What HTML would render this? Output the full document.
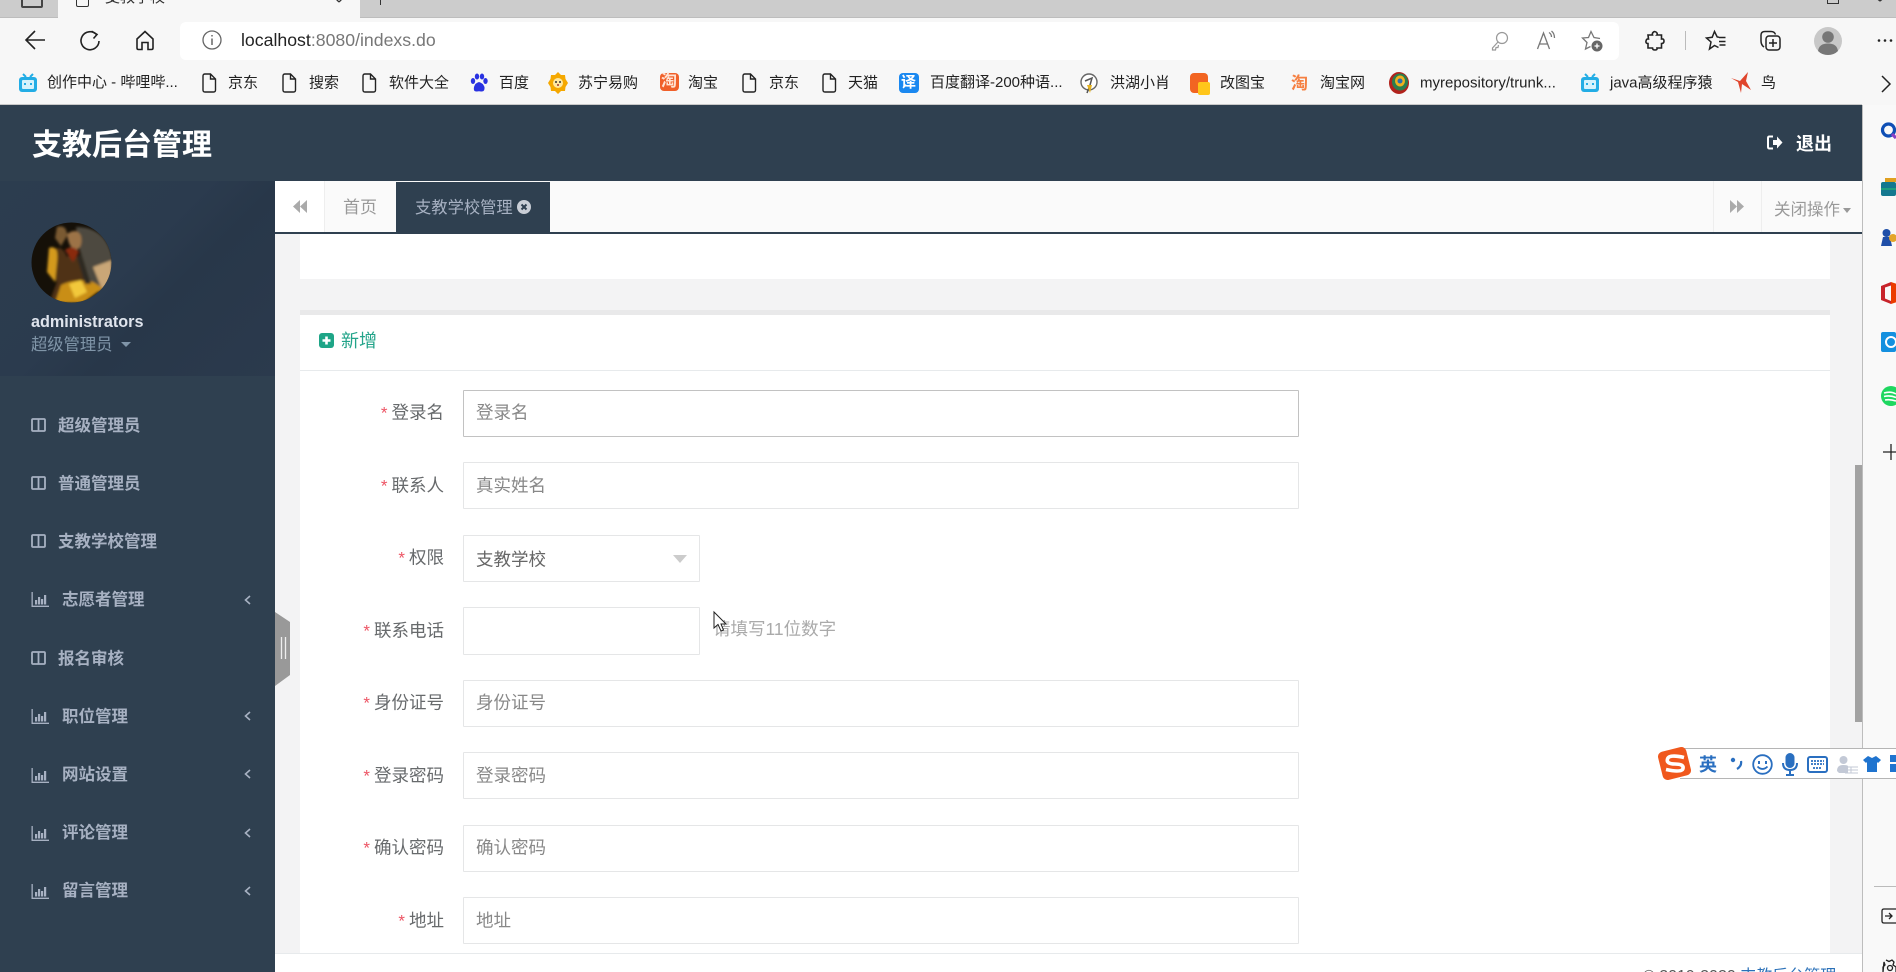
<!DOCTYPE html>
<html lang="zh"><head><meta charset="utf-8"><title>支教后台管理</title>
<style>
html,body{margin:0;padding:0;width:1896px;height:972px;overflow:hidden;background:#fff}
body{position:relative;font-family:"Liberation Sans","Noto Sans CJK SC",sans-serif}
.a{position:absolute}
.t{position:absolute;white-space:nowrap;line-height:1}
svg{position:absolute;overflow:visible}
.bm{font-size:15px;color:#222;transform:translateY(-50%);top:83px}
.m{font-size:16.5px;font-weight:bold;color:#a7b1c2;left:58px;transform:translateY(-50%)}
.m.c{left:62px}
.inp{position:absolute;left:463px;width:834px;height:45px;background:#fff;border:1px solid #e5e6e7;border-radius:1px}
.l{font-size:17.5px;color:#676a6c;text-align:right;right:1452px;transform:translateY(-50%)}
.l i{font-style:normal;color:#ed5565;font-size:17px;margin-right:4px}
.p{font-size:17.5px;color:#888;left:476px;transform:translateY(-50%)}
</style></head><body>

<!-- browser chrome -->
<div class="a" style="left:0;top:0;width:1896px;height:105px;background:#f7f7f7"></div>
<div class="a" style="left:0;top:0;width:1896px;height:17px;background:#cccccc;border-bottom:1px solid #bdbdbd"></div>
<div class="a" style="left:58px;top:0;width:302px;height:18px;background:#f7f7f7"></div>
<div class="a" style="left:21px;top:-6px;width:18px;height:10px;border:2px solid #444;border-radius:2px"></div>
<div class="a" style="left:76px;top:-8px;width:11px;height:13px;border:1.5px solid #333;border-radius:2px"></div>
<div class="t" style="left:105px;top:-10px;font-size:15px;color:#333">支教学校</div>
<svg style="left:333px;top:0" width="12" height="6"><path d="M1-3L6 2 M11-3L6 2" stroke="#333" stroke-width="1.3" fill="none"/></svg>
<div class="a" style="left:380px;top:0;width:1px;height:5px;background:#333"></div>
<div class="a" style="left:1827px;top:-5px;width:10px;height:7px;border:1.5px solid #333"></div>
<svg style="left:1874px;top:0" width="12" height="6"><path d="M1-3L6 1 M11-3L6 1" stroke="#333" stroke-width="1.3" fill="none"/></svg>

<div class="a" style="left:180px;top:22px;width:1439px;height:38px;background:#fff;border-radius:6px"></div>
<svg style="left:24px;top:28px" width="24" height="24" fill="none" stroke="#222" stroke-width="1.6"><path d="M2 12H21M11 3L2 12L11 21"/></svg>
<svg style="left:79px;top:29px" width="22" height="24" fill="none" stroke="#222" stroke-width="1.6"><path d="M17.5 5.5A9 9 0 1 0 20 12"/><path d="M12.5 2.2L18 5.5 14.5 9.5"/></svg>
<svg style="left:135px;top:30px" width="20" height="21" fill="none" stroke="#222" stroke-width="1.6"><path d="M2 9L10 1.5 18 9V18Q18 19.5 16.5 19.5H13V12.5H7V19.5H3.5Q2 19.5 2 18Z"/></svg>
<svg style="left:202px;top:30px" width="20" height="20" fill="none" stroke="#666" stroke-width="1.3"><circle cx="10" cy="10" r="9"/><path d="M10 8.5V15M10 5V6.5" stroke-width="1.5"/></svg>
<div class="t" style="left:241px;top:32px;font-size:17.7px;color:#222"><span>localhost</span><span style="color:#777">:8080/indexs.do</span></div>
<svg style="left:1491px;top:31px" width="18" height="20" fill="none" stroke="#999" stroke-width="1.2"><circle cx="11" cy="7" r="5.5"/><path d="M7 11L1.5 17V19H4.5L5 16.5H7L7.5 14"/></svg>
<svg style="left:1536px;top:30px" width="20" height="20" fill="none" stroke="#777" stroke-width="1.3"><path d="M1.5 19L7.5 3 13.5 19M3.5 14H11.5"/><path d="M13 2.5Q15.5 4 15.5 7M15.5 1Q18.5 3.5 18.5 8"/></svg>
<svg style="left:1581px;top:30px" width="24" height="22" fill="none" stroke="#777" stroke-width="1.3"><path d="M19 8.500L13 7.500 10 1.500 7.500 7.500 1.500 8 6 12.500 4.500 19 9.500 16.500"/><circle cx="16" cy="16" r="5.5" fill="#666" stroke="none"/><path d="M13.500 16H18.500M16 13.500V18.500" stroke="#fff" stroke-width="1.300"/></svg>
<svg style="left:1645px;top:30px" width="20" height="21" fill="none" stroke="#222" stroke-width="1.6"><path d="M8 2.5Q10 0.5 12 3Q12.5 4.5 12 5H16.5V9Q19 8.5 19 11T16.5 13.5V18H12Q12.5 20 10 20T7.5 18H3V13.5Q0.5 13.5 1 11T3.5 9L3 5H7.5Q7 3.5 8 2.5Z"/></svg>
<div class="a" style="left:1685px;top:31px;width:1px;height:19px;background:#bbb"></div>
<svg style="left:1705px;top:30px" width="22" height="21" fill="none" stroke="#222" stroke-width="1.5"><path d="M14 7.300L12.200 7 9.500 1.500 7.200 7.300 1.500 8 6 12 4.500 19 9.500 15.500 13.500 17.500"/><path d="M14 7.500H20.500M14 11.500H20.500M14.500 15H20.500" stroke-width="1.400"/></svg>
<svg style="left:1760px;top:30px" width="22" height="22" fill="none" stroke="#222" stroke-width="1.5"><path d="M4 17Q1 15 1 11V5Q1 1.5 5 1.5H11Q14.5 1.5 15.5 4.5"/><rect x="6" y="6" width="14" height="14" rx="3"/><path d="M9 13H17M13 9V17"/></svg>
<svg style="left:1814px;top:27px" width="28" height="28"><circle cx="14" cy="14" r="14" fill="#c8c8c8"/><circle cx="14" cy="10" r="5.8" fill="#777"/><path d="M4 24Q5 16.5 14 16.5T24 24Q20 28 14 28T4 24Z" fill="#777"/></svg>
<svg style="left:1877px;top:38px" width="16" height="5"><circle cx="2" cy="2.5" r="1.3" fill="#222"/><circle cx="8" cy="2.5" r="1.3" fill="#222"/><circle cx="14" cy="2.5" r="1.3" fill="#222"/></svg>

<!-- bookmarks -->
<svg style="left:18px;top:73px" width="20" height="20"><path d="M5 1L8 4M15 1L12 4" stroke="#23ade5" stroke-width="2"/><rect x="1" y="4" width="18" height="15" rx="3" fill="#23ade5"/><rect x="4" y="7" width="12" height="9" rx="1" fill="#d5f2fc"/><path d="M7 10V12M13 10V12" stroke="#23ade5" stroke-width="2"/></svg>
<div class="t bm" style="left:47px;width:132px;overflow:hidden;line-height:18px">创作中心 - 哔哩哔...</div>
<svg style="left:201px;top:73px" width="16" height="20" fill="none" stroke="#222" stroke-width="1.4"><path d="M2 3Q2 1 4 1H9.5L14.5 6V17Q14.5 19 12.5 19H4Q2 19 2 17ZM9.5 1V6H14.5"/></svg>
<div class="t bm" style="left:228px">京东</div>
<svg style="left:281px;top:73px" width="16" height="20" fill="none" stroke="#222" stroke-width="1.4"><path d="M2 3Q2 1 4 1H9.5L14.5 6V17Q14.5 19 12.5 19H4Q2 19 2 17ZM9.5 1V6H14.5"/></svg>
<div class="t bm" style="left:309px">搜索</div>
<svg style="left:361px;top:73px" width="16" height="20" fill="none" stroke="#222" stroke-width="1.4"><path d="M2 3Q2 1 4 1H9.5L14.5 6V17Q14.5 19 12.5 19H4Q2 19 2 17ZM9.5 1V6H14.5"/></svg>
<div class="t bm" style="left:389px">软件大全</div>
<svg style="left:470px;top:73px" width="18" height="20" fill="#2932e1"><ellipse cx="3" cy="8" rx="2.2" ry="3"/><ellipse cx="7" cy="3.5" rx="2.2" ry="3"/><ellipse cx="12" cy="3.5" rx="2.2" ry="3"/><ellipse cx="15.5" cy="8" rx="2.2" ry="3"/><path d="M9 9Q5 10 4 14Q3 19 7 18.5Q9 18 11 18.5Q15 19 14.5 14Q13 10 9 9Z"/></svg>
<div class="t bm" style="left:499px">百度</div>
<svg style="left:548px;top:72px" width="20" height="22"><path d="M10 0L13 3 17 3 17.5 7 20 11 17.5 15 17 19 13 19 10 22 7 19 3 19 2.5 15 0 11 2.5 7 3 3 7 3Z" fill="#f5a800"/><circle cx="10" cy="11" r="5" fill="#ffe8a0"/><circle cx="8" cy="10" r="1" fill="#333"/><circle cx="12" cy="10" r="1" fill="#333"/><path d="M9 13H11" stroke="#933" stroke-width="1.5"/></svg>
<div class="t bm" style="left:578px">苏宁易购</div>
<div class="a" style="left:660px;top:73px;width:19px;height:18px;background:#f0602a;border-radius:4px"></div>
<div class="t" style="left:661px;top:74px;font-size:16px;font-weight:bold;color:#ffe3d4">淘</div>
<div class="t bm" style="left:688px">淘宝</div>
<svg style="left:741px;top:73px" width="16" height="20" fill="none" stroke="#222" stroke-width="1.4"><path d="M2 3Q2 1 4 1H9.5L14.5 6V17Q14.5 19 12.5 19H4Q2 19 2 17ZM9.5 1V6H14.5"/></svg>
<div class="t bm" style="left:769px">京东</div>
<svg style="left:821px;top:73px" width="16" height="20" fill="none" stroke="#222" stroke-width="1.4"><path d="M2 3Q2 1 4 1H9.5L14.5 6V17Q14.5 19 12.5 19H4Q2 19 2 17ZM9.5 1V6H14.5"/></svg>
<div class="t bm" style="left:848px">天猫</div>
<div class="a" style="left:899px;top:73px;width:20px;height:20px;background:#1a88f0;border-radius:4px"></div>
<div class="t" style="left:901px;top:75px;font-size:15px;font-weight:bold;color:#fff">译</div>
<div class="t bm" style="left:930px;width:132px;overflow:hidden;line-height:18px">百度翻译-200种语...</div>
<svg style="left:1079px;top:73px" width="20" height="22"><ellipse cx="10" cy="9" rx="8" ry="8" fill="#fff" stroke="#666" stroke-width="1.4"/><path d="M6 8L13 5 11 12 8 20" stroke="#555" stroke-width="1.5" fill="none"/><path d="M8 12L11 20 13 12Z" fill="#e6b422"/></svg>
<div class="t bm" style="left:1110px">洪湖小肖</div>
<div class="a" style="left:1190px;top:73px;width:18px;height:20px;background:#f26522;border-radius:4px"></div>
<div class="a" style="left:1198px;top:82px;width:12px;height:13px;background:#ffc61b;border-radius:2px"></div>
<div class="t bm" style="left:1220px">改图宝</div>
<div class="t" style="left:1291px;top:75px;font-size:17px;font-weight:bold;color:#f68042">淘</div>
<div class="t bm" style="left:1320px">淘宝网</div>
<svg style="left:1389px;top:72px" width="20" height="22"><ellipse cx="10" cy="11" rx="10" ry="11" fill="#b1221c"/><ellipse cx="11" cy="10" rx="8" ry="8.5" fill="#2c7d4e"/><ellipse cx="11" cy="9" rx="5" ry="5.5" fill="#efb11d"/><circle cx="11" cy="9" r="2.5" fill="#2a6fb0"/></svg>
<div class="t bm" style="left:1420px">myrepository/trunk...</div>
<svg style="left:1580px;top:73px" width="20" height="20"><path d="M5 1L8 4M15 1L12 4" stroke="#23ade5" stroke-width="2"/><rect x="1" y="4" width="18" height="15" rx="3" fill="#23ade5"/><rect x="4" y="7" width="12" height="9" rx="1" fill="#d5f2fc"/><path d="M7 10V12M13 10V12" stroke="#23ade5" stroke-width="2"/></svg>
<div class="t bm" style="left:1610px">java高级程序猿</div>
<svg style="left:1731px;top:72px" width="21" height="22"><path d="M0 6L9 9 17 0 15 9 20 18 11 12 10 21 7 10Z" fill="#e0452c"/></svg>
<div class="t bm" style="left:1761px">鸟</div>
<svg style="left:1880px;top:75px" width="12" height="18" fill="none" stroke="#222" stroke-width="1.5"><path d="M2 1L10 9 2 17"/></svg>

<!-- app header -->
<div class="a" style="left:0;top:105px;width:1862px;height:76px;background:#2f4050"></div>
<div class="a" style="left:0;top:104px;width:1862px;height:1px;background:#c9c9c9"></div>
<div class="t" style="left:32px;top:131px;font-size:30px;font-weight:bold;color:#fff">支教后台管理</div>
<svg style="left:1767px;top:135px" width="16" height="15"><path d="M6 1.5H2.5Q1 1.5 1 3V12Q1 13.5 2.5 13.5H6" fill="none" stroke="#fff" stroke-width="2"/><path d="M6 5H10V1.5L15.5 7.5 10 13.5V10H6Z" fill="#fff"/></svg>
<div class="t" style="left:1796px;top:135px;font-size:18px;font-weight:bold;color:#fff">退出</div>

<!-- right edge bar -->
<div class="a" style="left:1862px;top:105px;width:34px;height:867px;background:#f9f9f9"></div>
<div class="a" style="left:1862px;top:105px;width:1px;height:867px;background:#bdbdbd"></div>
<svg style="left:1880px;top:122px" width="18" height="18" fill="none" stroke="#0f4fb5" stroke-width="3.2"><circle cx="8.5" cy="8" r="6"/><path d="M12 12L16 16" stroke="#8a3fc4"/></svg>
<div class="a" style="left:1881px;top:182px;width:15px;height:14px;background:#14788f;border-radius:2px"></div>
<div class="a" style="left:1885px;top:178px;width:11px;height:4px;border:2px solid #e0a020;box-sizing:border-box"></div>
<div class="a" style="left:1881px;top:188px;width:15px;height:2px;background:#1e9e7e"></div>
<svg style="left:1880px;top:228px" width="16" height="20"><circle cx="6.5" cy="5" r="4" fill="#1f4fa8"/><path d="M3 9H10L12 18H1Z" fill="#1f4fa8"/><circle cx="13" cy="10" r="4" fill="#e3a52b"/></svg>
<svg style="left:1881px;top:281px" width="16" height="24"><path d="M0 5L10 1V4.5L4 6.5V17.5L10 20V23L0 19Z" fill="#c8242b"/><path d="M10 1L16 3V21L10 23Z" fill="#eb3c00"/></svg>
<div class="a" style="left:1881px;top:332px;width:15px;height:20px;background:#1490df;border-radius:2px"></div>
<div class="a" style="left:1885px;top:336px;width:8px;height:8px;border:2px solid #fff;border-radius:50%;box-sizing:content-box"></div>
<svg style="left:1881px;top:386px" width="15" height="20"><circle cx="10" cy="10" r="10" fill="#1ed760"/><path d="M3 7Q10 5 15 8M3 10.500Q9 9 15 11.500M4 14Q9 13 15 15" stroke="#fff" stroke-width="1.6" fill="none"/></svg>
<svg style="left:1884px;top:444px" width="12" height="16" fill="none" stroke="#222" stroke-width="1.3"><path d="M7 0V16M-1 8H12"/></svg>
<div class="a" style="left:1874px;top:886px;width:22px;height:1px;background:#bbb"></div>
<svg style="left:1881px;top:908px" width="15" height="16" fill="none" stroke="#222" stroke-width="1.3"><path d="M15 1H3Q1 1 1 3V13Q1 15 3 15H15"/><path d="M4 8H11M8 5L11 8 8 11"/></svg>
<svg style="left:1881px;top:958px" width="15" height="16" fill="none" stroke="#222" stroke-width="1.3"><path d="M5 2L8 3.500 11 2 13 4 12 7 15 9 15 14M2 14V9L4 7 3 4Z"/><circle cx="9" cy="10" r="2.500"/></svg>

<!-- sidebar -->
<div class="a" style="left:0;top:181px;width:275px;height:791px;background:#2f4050"></div>
<div class="a" style="left:0;top:181px;width:275px;height:195px;background:linear-gradient(135deg,#2c3d4f 0%,#2b3b4e 45%,#283749 60%,#2b3a4d 100%)"></div>
<svg style="left:31px;top:222px" width="81" height="81">
<defs><clipPath id="av"><circle cx="40.500" cy="40.500" r="40"/></clipPath><filter id="bl" x="-10%" y="-10%" width="120%" height="120%"><feGaussianBlur stdDeviation="1.400"/></filter></defs>
<g clip-path="url(#av)"><rect width="81" height="81" fill="#151008"/>
<g filter="url(#bl)">
<path d="M45 5Q75 5 81 35V70H60L50 35Z" fill="#4d4a3f"/>
<path d="M62 45L81 38V72L70 65Z" fill="#c9a677"/>
<path d="M26 5Q36 2 36 14L30 24 24 16Z" fill="#7a5a30"/>
<path d="M36 12Q46 5 50 14 52 24 46 28 38 28 36 12Z" fill="#9c7347"/>
<path d="M20 30Q30 20 36 35 44 28 50 40L58 60 70 65 50 81H18L26 60 20 50Z" fill="#4f3316"/>
<path d="M18 26Q28 22 26 40L24 60 16 50Z" fill="#d49a1a"/>
<path d="M30 63Q45 56 62 60L72 66 52 81H24Z" fill="#c98e14"/>
<path d="M34 28Q42 22 48 30L42 40Z" fill="#8a2a10"/>
<path d="M38 62L50 58 56 70 44 76Z" fill="#f2c83a"/>
<path d="M50 30L60 62 54 62 46 36Z" fill="#2f2a22"/>
</g></g></svg>
<div class="t" style="left:31px;top:314px;font-size:16.2px;font-weight:bold;color:#dfe4ed">administrators</div>
<div class="t" style="left:31px;top:337px;font-size:16.3px;color:#8095a8">超级管理员</div>
<div class="a" style="left:121px;top:342px;width:0;height:0;border-left:5px solid transparent;border-right:5px solid transparent;border-top:5px solid #8095a8"></div>

<svg width="0" height="0" style="left:0;top:0"><defs>
<g id="tb" fill="none" stroke="#a7b1c2" stroke-width="1.800"><rect x="1" y="1" width="13" height="12" rx="1"/><path d="M7.500 1V13" /></g>
<g id="bc" fill="#a7b1c2"><path d="M0.500 0V15H18V13.600H1.800V0Z"/><rect x="4" y="8" width="2.200" height="4.500"/><rect x="7" y="5" width="2.200" height="7.500"/><rect x="10" y="7" width="2.200" height="5.500"/><rect x="13" y="3" width="2.200" height="9.500"/></g>
<path id="ch" d="M6 1L1.500 5 6 9" fill="none" stroke="#a7b1c2" stroke-width="1.600"/>
</defs></svg>

<svg style="left:31px;top:418px" width="16" height="15"><use href="#tb"/></svg><div class="t m" style="top:426px">超级管理员</div>
<svg style="left:31px;top:476px" width="16" height="15"><use href="#tb"/></svg><div class="t m" style="top:484px">普通管理员</div>
<svg style="left:31px;top:534px" width="16" height="15"><use href="#tb"/></svg><div class="t m" style="top:542px">支教学校管理</div>
<svg style="left:31px;top:592px" width="19" height="16"><use href="#bc"/></svg><div class="t m c" style="top:600px">志愿者管理</div><svg style="left:244px;top:595px" width="8" height="10"><use href="#ch"/></svg>
<svg style="left:31px;top:651px" width="16" height="15"><use href="#tb"/></svg><div class="t m" style="top:659px">报名审核</div>
<svg style="left:31px;top:709px" width="19" height="16"><use href="#bc"/></svg><div class="t m c" style="top:717px">职位管理</div><svg style="left:244px;top:711px" width="8" height="10"><use href="#ch"/></svg>
<svg style="left:31px;top:768px" width="19" height="16"><use href="#bc"/></svg><div class="t m c" style="top:775px">网站设置</div><svg style="left:244px;top:769px" width="8" height="10"><use href="#ch"/></svg>
<svg style="left:31px;top:826px" width="19" height="16"><use href="#bc"/></svg><div class="t m c" style="top:833px">评论管理</div><svg style="left:244px;top:828px" width="8" height="10"><use href="#ch"/></svg>
<svg style="left:31px;top:884px" width="19" height="16"><use href="#bc"/></svg><div class="t m c" style="top:891px">留言管理</div><svg style="left:244px;top:886px" width="8" height="10"><use href="#ch"/></svg>

<!-- content -->
<div class="a" style="left:275px;top:234px;width:1587px;height:719px;background:#f3f3f4"></div>

<!-- tabs -->
<div class="a" style="left:275px;top:181px;width:1587px;height:51px;background:#fafafa"></div>
<div class="a" style="left:275px;top:232px;width:1587px;height:2px;background:#2f4050"></div>
<div class="a" style="left:275px;top:181px;width:49px;height:51px;background:#fff;border-right:1px solid #eee"></div>
<svg style="left:293px;top:200px" width="15" height="13" fill="#aaa"><path d="M7 0V13L0 6.500ZM14 0V13L7 6.500Z"/></svg>
<div class="t" style="left:343px;top:199px;font-size:17px;color:#999">首页</div>
<div class="a" style="left:396px;top:182px;width:154px;height:50px;background:#2f4050"></div>
<div class="t" style="left:415px;top:200px;font-size:16.300px;color:#a7b1c2">支教学校管理</div>
<svg style="left:517px;top:200px" width="14" height="14"><circle cx="7" cy="7" r="7" fill="#c9ced6"/><path d="M4.500 4.500L9.500 9.500M9.500 4.500L4.500 9.500" stroke="#2f4050" stroke-width="2"/></svg>
<div class="a" style="left:1713px;top:181px;width:49px;height:51px;border-left:1px solid #eee;border-right:1px solid #eee;box-sizing:border-box"></div>
<svg style="left:1730px;top:200px" width="15" height="13" fill="#aaa"><path d="M0 0V13L7 6.500ZM7 0V13L14 6.500Z"/></svg>
<div class="t" style="left:1774px;top:202px;font-size:16.500px;color:#999">关闭操作</div>
<div class="a" style="left:1843px;top:208px;width:0;height:0;border-left:4.500px solid transparent;border-right:4.500px solid transparent;border-top:5px solid #999"></div>

<!-- panels -->
<div class="a" style="left:300px;top:234px;width:1530px;height:45px;background:#fff"></div>
<div class="a" style="left:300px;top:310px;width:1530px;height:5px;background:#e9e9ea"></div>
<div class="a" style="left:300px;top:315px;width:1530px;height:638px;background:#fff"></div>
<div class="a" style="left:300px;top:370px;width:1530px;height:1px;background:#e7eaec"></div>
<svg style="left:319px;top:333px" width="15" height="15"><rect width="15" height="15" rx="3" fill="#1ea587"/><path d="M7.500 3.500V11.500M3.500 7.500H11.500" stroke="#fff" stroke-width="2.600"/></svg>
<div class="t" style="left:341px;top:332px;font-size:18px;color:#23a48a">新增</div>

<div class="t l" style="top:413px"><i>*</i>登录名</div>
<div class="inp" style="top:390px;border-color:#c2c2c2"></div><div class="t p" style="top:413px">登录名</div>
<div class="t l" style="top:486px"><i>*</i>联系人</div>
<div class="inp" style="top:462px"></div><div class="t p" style="top:486px">真实姓名</div>
<div class="t l" style="top:558px"><i>*</i>权限</div>
<div class="inp" style="top:535px;width:235px"></div><div class="t p" style="top:560px;color:#666">支教学校</div>
<div class="a" style="left:673px;top:555px;width:0;height:0;border-left:7.500px solid transparent;border-right:7.500px solid transparent;border-top:8px solid #ccc"></div>
<div class="t l" style="top:631px"><i>*</i>联系电话</div>
<div class="inp" style="top:607px;width:235px;height:46px"></div>
<div class="t" style="left:713px;top:621px;font-size:17.500px;color:#aaa">请填写11位数字</div>
<svg style="left:713px;top:611px" width="14" height="22"><path d="M1 1V17L5 13.500 8 20 10.500 19 8 13H13Z" fill="#fff" stroke="#222" stroke-width="1"/></svg>
<div class="t l" style="top:703px"><i>*</i>身份证号</div>
<div class="inp" style="top:680px"></div><div class="t p" style="top:703px">身份证号</div>
<div class="t l" style="top:776px"><i>*</i>登录密码</div>
<div class="inp" style="top:752px"></div><div class="t p" style="top:776px">登录密码</div>
<div class="t l" style="top:848px"><i>*</i>确认密码</div>
<div class="inp" style="top:825px"></div><div class="t p" style="top:848px">确认密码</div>
<div class="t l" style="top:921px"><i>*</i>地址</div>
<div class="inp" style="top:897px"></div><div class="t p" style="top:921px">地址</div>

<!-- footer -->
<div class="a" style="left:275px;top:953px;width:1587px;height:19px;background:#fff;border-top:1px solid #e7eaec;box-sizing:border-box"></div>
<div class="t" style="left:1643px;top:969px;font-size:16px;color:#555">© 2019-2020 <span style="color:#2a70b8">支教后台管理</span></div>

<!-- scrollbar -->
<div class="a" style="left:1855px;top:465px;width:7px;height:257px;background:#a2a2a2"></div>

<!-- sidebar handle -->
<svg style="left:275px;top:612px" width="15" height="74"><path d="M0 0L15 10V63L0 74Z" fill="#999"/><path d="M6.500 25V47M10.500 25V47" stroke="#eee" stroke-width="1.300"/></svg>

<!-- sogou IME -->
<div class="a" style="left:1680px;top:748px;width:216px;height:31px;background:#fff;border-top:1px solid #b5b5b5;border-bottom:1px solid #b5b5b5;box-sizing:border-box"></div>
<div class="a" style="left:1660px;top:749px;width:29px;height:29px;background:#f0581d;border-radius:5px;transform:rotate(-14deg)"></div>
<svg style="left:1663px;top:754px" width="24" height="20" fill="none" stroke="#fff" stroke-width="3.600"><path d="M21 3.500Q6 0 4.500 5T12 10 20 14.500 3 15.500"/></svg>
<div class="t" style="left:1699px;top:756px;font-size:18px;font-weight:bold;color:#2a6fc0">英</div>
<svg style="left:1730px;top:756px" width="14" height="16"><circle cx="3" cy="4" r="2.200" fill="#2a6fc0"/><path d="M11 5Q12 10 7 13" fill="none" stroke="#2a6fc0" stroke-width="2.200"/></svg>
<svg style="left:1752px;top:754px" width="21" height="21" fill="none" stroke="#2a6fc0" stroke-width="1.800"><circle cx="10.500" cy="10.500" r="9.300"/><path d="M7 7V10M14 7V10" stroke-width="2"/><path d="M5.500 12.500Q10.500 17.500 15.500 12.500"/></svg>
<svg style="left:1782px;top:753px" width="16" height="23" fill="none" stroke="#2a6fc0" stroke-width="2"><rect x="4.500" y="1" width="7" height="13" rx="3.500" fill="#2a6fc0"/><path d="M1 10Q1 17 8 17T15 10M8 17V22M4 22H12"/></svg>
<svg style="left:1807px;top:756px" width="21" height="17"><rect x="1" y="1" width="19" height="15" rx="2" fill="none" stroke="#2a6fc0" stroke-width="2"/><path d="M4 5H17M4 8H17M6 12H15" stroke="#2a6fc0" stroke-width="1.800" stroke-dasharray="2 1"/></svg>
<svg style="left:1836px;top:755px" width="22" height="20"><circle cx="7.500" cy="5" r="4" fill="#c3c9d6"/><path d="M1 16Q1 10 7 10T12 12V18H3Z" fill="#c3c9d6"/><path d="M9 12H22M9 15H22M9 18H22M15 12V18" stroke="#c3c9d6" stroke-width="1"/></svg>
<svg style="left:1863px;top:755px" width="18" height="18"><path d="M5 1L9 3 13 1 18 5 15 8 14 7V17H4V7L3 8 0 5Z" fill="#1f74cf"/></svg>
<div class="a" style="left:1890px;top:755px;width:6px;height:7px;background:#1f74cf"></div>
<div class="a" style="left:1890px;top:764px;width:6px;height:8px;background:#1f74cf"></div>

</body></html>
